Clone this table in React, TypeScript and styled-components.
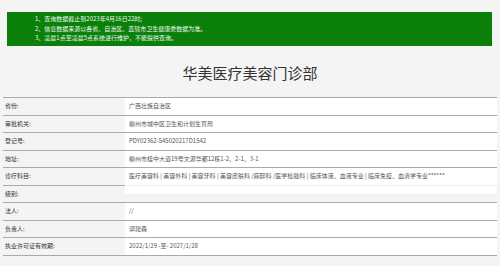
import React from "react";
import styled, { createGlobalStyle } from "styled-components";

const Global = createGlobalStyle`
  html, body { margin: 0; padding: 0; }
  body {
    background: #f4f4f5;
    font-family: "Noto Sans CJK SC", "Noto Sans", sans-serif;
    color: #333;
  }
`;

const Page = styled.div`
  width: 500px;
  height: 266px;
  overflow: hidden;
  padding-top: 12px;
  box-sizing: border-box;
`;

const Notice = styled.div`
  margin: 0 8px 0 7px;
  height: 34px;
  box-sizing: border-box;
  padding: 2px 0 0 28px;
  background: #0a800b;
`;

const NoticeLine = styled.div`
  font-size: 6px;
  line-height: 9.5px;
  color: #eef7ee;
  white-space: nowrap;
`;

const Title = styled.h1`
  margin: 17px 0 14px;
  height: 20px;
  line-height: 20px;
  font-size: 15px;
  font-weight: 400;
  text-align: center;
  color: #333;
`;

const Table = styled.div`
  margin: 0 3px;
  display: grid;
  grid-template-columns: 122px 1fr;
  border-bottom: 1px solid #a3adab;
`;

const Label = styled.div`
  height: 16.5px;
  line-height: 16.5px;
  border-top: 1px solid #a3adab;
  padding-left: 2px;
  font-size: 6px;
  color: #333;
  background: #f4f4f5;
  white-space: nowrap;
`;

const Value = styled.div<{ $empty?: boolean }>`
  height: 16.5px;
  line-height: 16.5px;
  border-top: 1px solid ${(p) => (p.$empty ? "#eeeeee" : "#a3adab")};
  padding-left: 4px;
  font-size: 6px;
  color: #555;
  background: ${(p) =>
    p.$empty ? "linear-gradient(#fff 0, #fff 8px, #f4f4f5 8px)" : "#fff"};
  white-space: nowrap;
  overflow: hidden;
`;

const rows: [string, string][] = [
  ["省份:", "广西壮族自治区"],
  ["审批机关:", "柳州市城中区卫生和计划生育局"],
  ["登记号:", "PDY02362-545020217D1542"],
  ["地址:", "柳州市桂中大道19号文源华都12栋1-2、2-1、3-1"],
  [
    "诊疗科目:",
    "医疗美容科 | 美容外科 | 美容牙科 | 美容皮肤科 /麻醉科 /医学检验科 | 临床体液、血液专业 | 临床免疫、血清学专业******",
  ],
  ["级别:", ""],
  ["法人:", "//"],
  ["负责人:", "郭建森"],
  ["执业许可证有效期:", "2022/1/29 -至- 2027/1/28"],
];

export default function App() {
  return (
    <Page>
      <Global />
      <Notice>
        <NoticeLine>1、查询数据截止到2023年4月16日22时;</NoticeLine>
        <NoticeLine>2、信息数据来源以各省、自治区、直辖市卫生健康委数据为准。</NoticeLine>
        <NoticeLine>3、凌晨1点至凌晨5点系统进行维护，不能提供查询。</NoticeLine>
      </Notice>
      <Title>华美医疗美容门诊部</Title>
      <Table>
        {rows.map(([k, v]) => (
          <React.Fragment key={k}>
            <Label>{k}</Label>
            <Value $empty={v === ""}>{v}</Value>
          </React.Fragment>
        ))}
      </Table>
    </Page>
  );
}
